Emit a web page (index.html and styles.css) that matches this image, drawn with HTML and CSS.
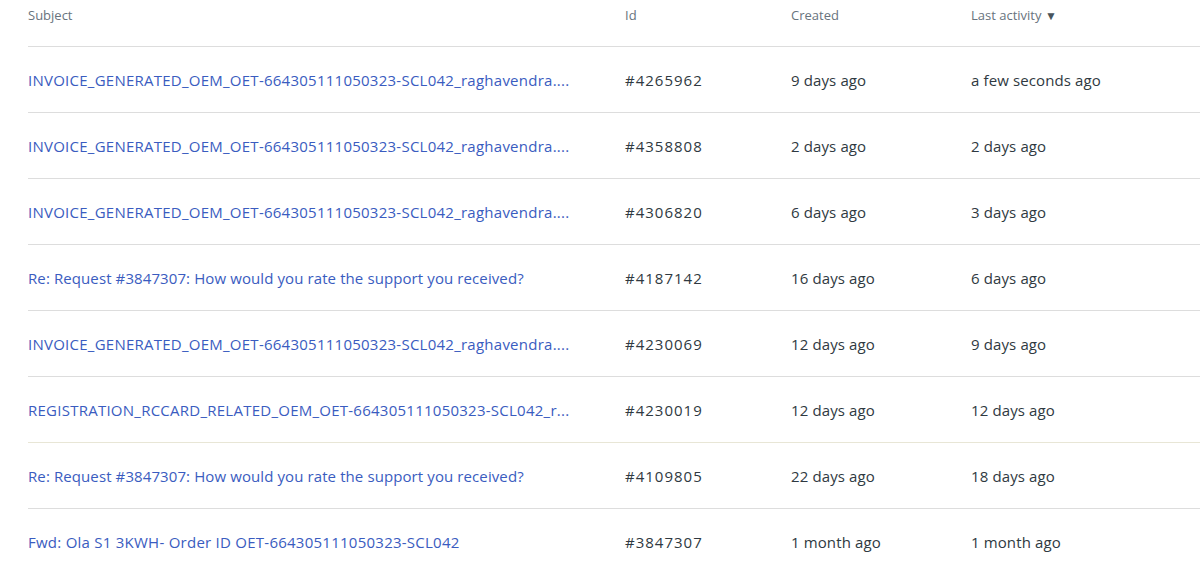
FILE: index.html
```html
<!DOCTYPE html>
<html>
<head>
<meta charset="utf-8">
<link rel="stylesheet" href="styles.css">
</head>
<body>
<table class="requests">
  <thead>
    <tr>
      <th class="col-subject">Subject</th>
      <th class="col-id">Id</th>
      <th class="col-created">Created</th>
      <th class="col-activity">Last activity <span class="sort">▼</span></th>
    </tr>
  </thead>
  <tbody>
    <tr><td class="subject"><a href="#">INVOICE_GENERATED_OEM_OET-664305111050323-SCL042_raghavendra....</a></td><td class="id">#4265962</td><td>9 days ago</td><td>a few seconds ago</td></tr>
    <tr><td class="subject"><a href="#">INVOICE_GENERATED_OEM_OET-664305111050323-SCL042_raghavendra....</a></td><td class="id">#4358808</td><td>2 days ago</td><td>2 days ago</td></tr>
    <tr><td class="subject"><a href="#">INVOICE_GENERATED_OEM_OET-664305111050323-SCL042_raghavendra....</a></td><td class="id">#4306820</td><td>6 days ago</td><td>3 days ago</td></tr>
    <tr><td class="subject mixed"><a href="#">Re: Request #3847307: How would you rate the support you received?</a></td><td class="id">#4187142</td><td>16 days ago</td><td>6 days ago</td></tr>
    <tr><td class="subject"><a href="#">INVOICE_GENERATED_OEM_OET-664305111050323-SCL042_raghavendra....</a></td><td class="id">#4230069</td><td>12 days ago</td><td>9 days ago</td></tr>
    <tr class="warm"><td class="subject"><a href="#">REGISTRATION_RCCARD_RELATED_OEM_OET-664305111050323-SCL042_r...</a></td><td class="id">#4230019</td><td>12 days ago</td><td>12 days ago</td></tr>
    <tr><td class="subject mixed"><a href="#">Re: Request #3847307: How would you rate the support you received?</a></td><td class="id">#4109805</td><td>22 days ago</td><td>18 days ago</td></tr>
    <tr><td class="subject"><a href="#">Fwd: Ola S1 3KWH- Order ID OET-664305111050323-SCL042</a></td><td class="id">#3847307</td><td>1 month ago</td><td>1 month ago</td></tr>
  </tbody>
</table>
</body>
</html>
```
FILE: styles.css
```css
html, body {
  margin: 0;
  padding: 0;
  background: #ffffff;
}
body {
  padding-left: 28px;
  font-family: "Open Sans", "Liberation Sans", sans-serif;
  overflow: hidden;
}
.requests {
  border-collapse: collapse;
  width: 1200px;
  table-layout: fixed;
}
.requests th {
  font-weight: 400;
  font-size: 13px;
  color: #68737d;
  text-align: left;
  height: 46px;
  padding: 0;
  vertical-align: top;
  line-height: 30px;
  border-bottom: 1px solid #dddddd;
}
.col-subject { width: 597px; }
.col-id { width: 166px; }
.col-created { width: 180px; }
.sort {
  font-size: 12px;
  color: #49545c;
}
.requests td {
  height: 64px;
  padding: 1px 0 0 0;
  font-size: 15px;
  letter-spacing: 0.12px;
  color: #2f3941;
  border-bottom: 1px solid #dddddd;
  white-space: nowrap;
}
.requests td.subject { letter-spacing: 0.25px; }
.requests td.subject.mixed { letter-spacing: 0.1px; }
.requests td.id { letter-spacing: 1px; }
.requests tr.warm td { border-bottom-color: #e8e6d6; }
.requests tbody tr:last-child td { border-bottom: none; }
.requests a {
  color: #3a5cc0;
  text-decoration: none;
}
```
